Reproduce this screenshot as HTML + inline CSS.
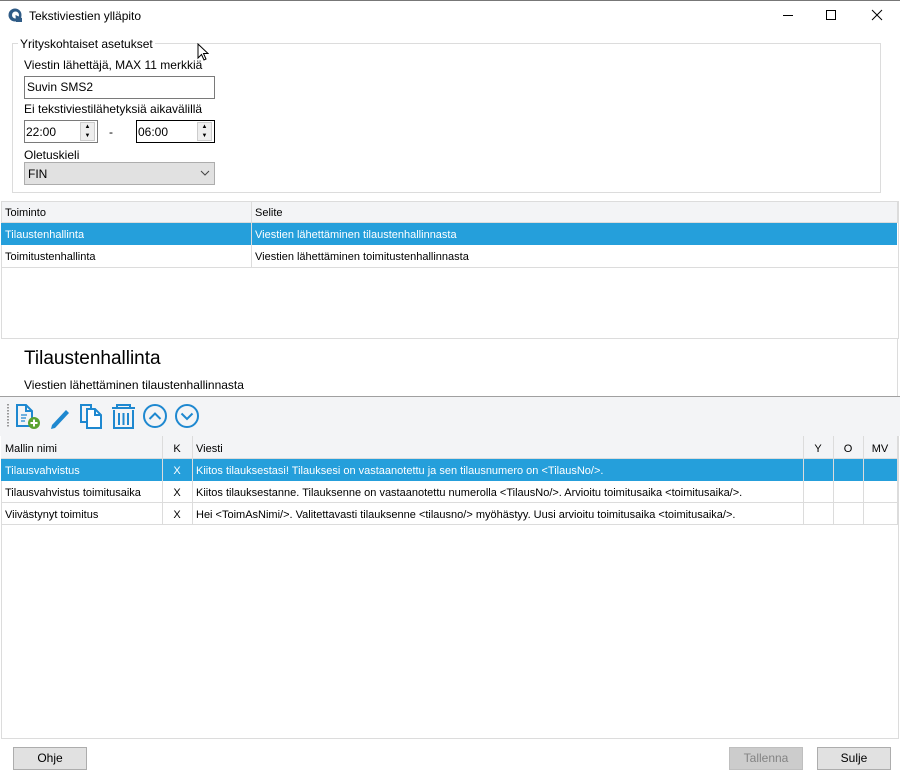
<!DOCTYPE html>
<html><head><meta charset="utf-8"><style>
*{box-sizing:border-box;margin:0;padding:0}
body{width:900px;height:779px;background:#fff;font-family:"Liberation Sans",sans-serif;font-size:12px;color:#000;position:relative;overflow:hidden}
.a{position:absolute}
.t{position:absolute;white-space:nowrap}
.cell{position:absolute;white-space:nowrap;font-size:11px;line-height:21px;padding-left:4px;padding-top:2px;overflow:hidden}
.btn{position:absolute;height:23px;border:1px solid #adadad;background:#e1e1e1;text-align:center;line-height:21px;font-size:12px}
</style></head><body>
<div class="a" style="left:0;top:0;width:900px;height:1px;background:#777"></div>
<svg class="a" style="left:8px;top:8px" width="14" height="14" viewBox="0 0 14 14"><circle cx="7" cy="7" r="6.5" fill="#2f5b86"/><circle cx="7.5" cy="7" r="3.5" fill="#fff"/><path d="M7.5 7 L14 10 L14 14 L8 14Z" fill="#2f5b86"/></svg>
<div class="t" style="left:29px;top:9px;font-size:12px">Tekstiviestien ylläpito</div>
<div class="a" style="left:783px;top:15px;width:10px;height:1px;background:#000"></div>
<div class="a" style="left:826px;top:10px;width:10px;height:10px;border:1px solid #000"></div>
<svg class="a" style="left:871px;top:9px" width="12" height="12"><path d="M1 1 L11 11 M11 1 L1 11" stroke="#000" stroke-width="1"/></svg>

<div class="a" style="left:12px;top:43px;width:869px;height:150px;border:1px solid #dcdcdc"></div>
<div class="t" style="left:18px;top:37px;background:#fff;padding:0 2px;font-size:12px">Yrityskohtaiset asetukset</div>
<svg class="a" style="left:197px;top:43px" width="12" height="20" viewBox="0 0 12 20"><path d="M1 1 L1 15 L4.5 11.5 L7 17 L9 16 L6.5 10.5 L11 10.5Z" fill="#fff" stroke="#000" stroke-width="1"/></svg>
<div class="t" style="left:24px;top:58px">Viestin lähettäjä, MAX 11 merkkiä</div>
<div class="a" style="left:24px;top:76px;width:191px;height:23px;border:1px solid #7a7a7a;padding:3px 2px">Suvin SMS2</div>
<div class="t" style="left:24px;top:102px">Ei tekstiviestilähetyksiä aikavälillä</div>
<div class="a" style="left:24px;top:120px;width:74px;height:23px;border:1px solid #7a7a7a;padding:4px 1px">22:00</div>
<div class="a" style="left:80px;top:122px;width:15px;height:19px;border:1px solid #ccc;background:#eee;font-size:6px;text-align:center;line-height:9px">▲<br>▼</div>
<div class="t" style="left:109px;top:125px">-</div>
<div class="a" style="left:136px;top:120px;width:79px;height:23px;border:1px solid #000;padding:4px 1px">06:00</div>
<div class="a" style="left:197px;top:122px;width:15px;height:19px;border:1px solid #ccc;background:#eee;font-size:6px;text-align:center;line-height:9px">▲<br>▼</div>
<div class="t" style="left:24px;top:148px">Oletuskieli</div>
<div class="a" style="left:24px;top:162px;width:191px;height:23px;border:1px solid #adadad;background:#e1e1e1;padding:4px 3px">FIN</div>
<svg class="a" style="left:200px;top:170px" width="10" height="6"><path d="M1 1 L5 5 L9 1" fill="none" stroke="#444"/></svg>

<div class="a" style="left:1px;top:201px;width:898px;height:138px;border:1px solid #dcdcdc;border-top:0"></div>
<div class="a" style="left:1px;top:201px;width:897px;height:22px;background:#f3f4f6;border:1px solid #dcdcdc"></div>
<div class="a" style="left:1px;top:223px;width:896px;height:22px;background:#259fdb"></div>
<div class="a" style="left:1px;top:267px;width:897px;height:1px;background:#dcdcdc"></div>
<div class="a" style="left:251px;top:201px;width:1px;height:67px;background:#dcdcdc"></div>
<div class="cell" style="left:1px;top:201px">Toiminto</div>
<div class="cell" style="left:251px;top:201px">Selite</div>
<div class="cell" style="left:1px;top:223px;color:#fff">Tilaustenhallinta</div>
<div class="cell" style="left:251px;top:223px;color:#fff">Viestien lähettäminen tilaustenhallinnasta</div>
<div class="cell" style="left:1px;top:245px">Toimitustenhallinta</div>
<div class="cell" style="left:251px;top:245px">Viestien lähettäminen toimitustenhallinnasta</div>

<div class="a" style="left:897px;top:339px;width:1px;height:58px;background:#dcdcdc"></div>
<div class="t" style="left:24px;top:348px;font-size:19px">Tilaustenhallinta</div>
<div class="t" style="left:24px;top:378px">Viestien lähettäminen tilaustenhallinnasta</div>

<div class="a" style="left:0;top:396px;width:900px;height:40px;background:#f3f4f6;border-top:1px solid #a0a0a0"></div>
<div class="a" style="left:7px;top:404px;width:2px;height:24px;background-image:linear-gradient(#999 50%,transparent 50%);background-size:2px 3px"></div>
<svg class="a" style="left:14px;top:402px" width="190" height="28" viewBox="0 0 190 28">
<g fill="none" stroke="#1e88d0" stroke-width="2">
<path d="M3 3 H12 L18 9 V24 H3Z"/><path d="M12 3 V9 H18"/>
<path d="M7 13h6M7 16h5M7 19h4" stroke-width="1.3"/>
</g>
<circle cx="20" cy="21" r="6" fill="#5aa332"/><path d="M20 17.5v7M16.5 21h7" stroke="#fff" stroke-width="2"/>
<path d="M38 23 L52 8 L55 11 L41 26 L37 27Z" fill="#1e88d0"/>
<g fill="none" stroke="#1e88d0" stroke-width="2">
<path d="M67 3 H77 V20 H67Z"/><path d="M73 7 H81 L87 13 V26 H73Z" fill="#fff"/><path d="M81 7 V13 H87"/>
<path d="M98 6 H121 M103 6 V3 H116 V6 M100 8 V26 H119 V8 M105 11 V23 M109.5 11 V23 M114 11 V23"/>
<circle cx="141" cy="14" r="11"/><path d="M135.5 17 L141 11.5 L146.5 17"/>
<circle cx="173" cy="14" r="11"/><path d="M167.5 11.5 L173 17 L178.5 11.5"/>
</g></svg>

<div class="a" style="left:1px;top:436px;width:898px;height:303px;border:1px solid #dcdcdc;border-top:0"></div>
<div class="a" style="left:1px;top:436px;width:897px;height:23px;background:#f3f4f6;border-bottom:1px solid #dcdcdc"></div>
<div class="a" style="left:1px;top:459px;width:896px;height:22px;background:#259fdb"></div>
<div class="a" style="left:1px;top:502px;width:897px;height:1px;background:#dcdcdc"></div>
<div class="a" style="left:1px;top:524px;width:897px;height:1px;background:#dcdcdc"></div>
<div class="a" style="left:162px;top:436px;width:1px;height:89px;background:#dcdcdc"></div>
<div class="a" style="left:192px;top:436px;width:1px;height:89px;background:#dcdcdc"></div>
<div class="a" style="left:803px;top:436px;width:1px;height:89px;background:#dcdcdc"></div>
<div class="a" style="left:833px;top:436px;width:1px;height:89px;background:#dcdcdc"></div>
<div class="a" style="left:863px;top:436px;width:1px;height:89px;background:#dcdcdc"></div>
<div class="a" style="left:897px;top:436px;width:1px;height:89px;background:#dcdcdc"></div>
<div class="cell" style="left:1px;top:437px">Mallin nimi</div>
<div class="cell" style="left:162px;top:437px;width:30px;text-align:center;padding-left:0">K</div>
<div class="cell" style="left:192px;top:437px">Viesti</div>
<div class="cell" style="left:803px;top:437px;width:30px;text-align:center;padding-left:0">Y</div>
<div class="cell" style="left:833px;top:437px;width:30px;text-align:center;padding-left:0">O</div>
<div class="cell" style="left:863px;top:437px;width:34px;text-align:center;padding-left:0">MV</div>
<div class="cell" style="left:1px;top:459px;color:#fff">Tilausvahvistus</div>
<div class="cell" style="left:162px;top:459px;width:30px;text-align:center;padding-left:0;color:#fff">X</div>
<div class="cell" style="left:192px;top:459px;color:#fff">Kiitos tilauksestasi! Tilauksesi on vastaanotettu ja sen tilausnumero on &lt;TilausNo/&gt;.</div>
<div class="cell" style="left:1px;top:481px">Tilausvahvistus toimitusaika</div>
<div class="cell" style="left:162px;top:481px;width:30px;text-align:center;padding-left:0">X</div>
<div class="cell" style="left:192px;top:481px">Kiitos tilauksestanne. Tilauksenne on vastaanotettu numerolla &lt;TilausNo/&gt;. Arvioitu toimitusaika &lt;toimitusaika/&gt;.</div>
<div class="cell" style="left:1px;top:503px">Viivästynyt toimitus</div>
<div class="cell" style="left:162px;top:503px;width:30px;text-align:center;padding-left:0">X</div>
<div class="cell" style="left:192px;top:503px">Hei &lt;ToimAsNimi/&gt;. Valitettavasti tilauksenne &lt;tilausno/&gt; myöhästyy. Uusi arvioitu toimitusaika &lt;toimitusaika/&gt;.</div>

<div class="btn" style="left:13px;top:747px;width:74px">Ohje</div>
<div class="btn" style="left:729px;top:747px;width:74px;background:#cccccc;border-color:#bfbfbf;color:#838383">Tallenna</div>
<div class="btn" style="left:817px;top:747px;width:74px">Sulje</div>
</body></html>
